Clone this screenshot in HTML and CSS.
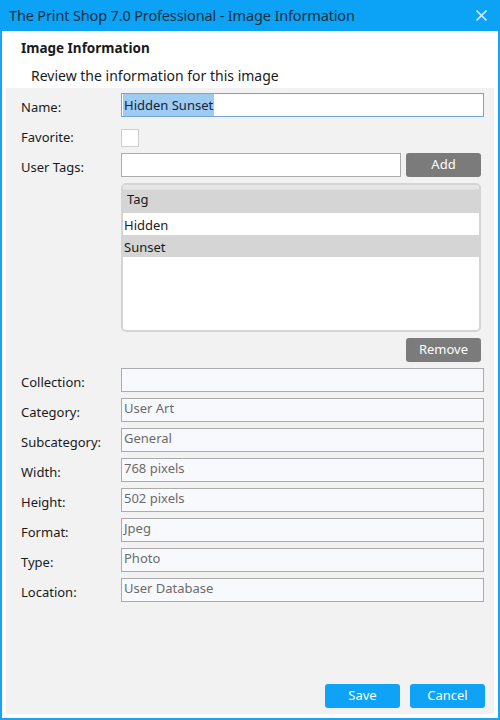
FILE: index.html
```html
<!DOCTYPE html>
<html>
<head>
<meta charset="utf-8">
<link rel="stylesheet" href="styles.css">
</head>
<body>
<div class="window">
  <div class="titlebar">
    <span class="title">The Print Shop 7.0 Professional - Image Information</span>
    <svg class="close" width="11" height="11" viewBox="0 0 11 11"><path d="M0.5 0.5 L10.5 10.5 M10.5 0.5 L0.5 10.5" stroke="#cfeafc" stroke-width="1.6" fill="none"/></svg>
  </div>
  <div class="header">
    <div class="h-title">Image Information</div>
    <div class="h-sub">Review the information for this image</div>
  </div>
  <div class="content">
    <div class="form">
      <div class="lbl">Name:</div>
      <div class="input focus"><span class="sel">Hidden Sunset</span></div>

      <div class="lbl">Favorite:</div>
      <div class="cbrow"><div class="checkbox"></div></div>

      <div class="lbl">User Tags:</div>
      <div class="tagrow">
        <div class="input tagin"></div>
        <div class="btn gray">Add</div>
      </div>

      <div></div>
      <div class="taglist">
        <div class="tl-head">Tag</div>
        <div class="tl-row">Hidden</div>
        <div class="tl-row alt">Sunset</div>
      </div>

      <div></div>
      <div class="remrow"><div class="btn gray">Remove</div></div>

      <div class="lbl">Collection:</div>
      <div class="field"></div>
      <div class="lbl">Category:</div>
      <div class="field">User Art</div>
      <div class="lbl">Subcategory:</div>
      <div class="field">General</div>
      <div class="lbl">Width:</div>
      <div class="field">768 pixels</div>
      <div class="lbl">Height:</div>
      <div class="field">502 pixels</div>
      <div class="lbl">Format:</div>
      <div class="field">Jpeg</div>
      <div class="lbl">Type:</div>
      <div class="field">Photo</div>
      <div class="lbl">Location:</div>
      <div class="field">User Database</div>
    </div>
    <div class="footer">
      <div class="btn blue">Save</div>
      <div class="btn blue">Cancel</div>
    </div>
  </div>
</div>
</body>
</html>
```

FILE: styles.css
```css
* { box-sizing: border-box; }
html, body { margin: 0; padding: 0; }
body {
  width: 500px;
  height: 720px;
  font-family: "Noto Sans", "Open Sans", sans-serif;
  font-size: 13px;
  color: #1a1a1a;
  background: #ffffff;
}
.window {
  width: 500px;
  height: 720px;
  border: 2px solid #1aa3ee;
  border-top: none;
  display: flex;
  flex-direction: column;
  background: #ffffff;
}
.titlebar {
  height: 31px;
  margin: 0 -2px;
  background: #0ca2f6;
  display: flex;
  align-items: center;
  justify-content: space-between;
  padding: 0 13px 1px 9px;
}
.title {
  font-size: 14.5px;
  color: #14303f;
  letter-spacing: -0.15px;
}
.close { display: block; }
.header {
  height: 57px;
  padding: 7px 0 0 19px;
}
.h-title {
  font-weight: bold;
  font-size: 13.5px;
  line-height: 20px;
}
.h-sub {
  font-size: 14px;
  line-height: 20px;
  margin-top: 8px;
  padding-left: 10px;
}
.content {
  flex: 1;
  margin: 0 4px 4px 4px;
  background: #f2f2f2;
  display: flex;
  flex-direction: column;
}
.form {
  display: grid;
  grid-template-columns: 100px 1fr;
  row-gap: 6px;
  padding: 5px 10px 0 15px;
  grid-auto-rows: auto;
}
.lbl {
  margin-top: 6px;
  line-height: 17px;
  white-space: nowrap;
}
.input {
  height: 24px;
  border: 1px solid #ababab;
  background: #ffffff;
  padding: 0 1px;
  line-height: 17px;
  display: flex;
}
.input.focus {
  border-color: #6fa6dd;
}
.sel {
  background: #9ecbf0;
  color: #14233a;
  height: 22px;
  padding: 3px 1px 0 1px;
  line-height: 17px;
}
.cbrow { height: 24px; }
.checkbox {
  width: 18px;
  height: 18px;
  margin-top: 6px;
  background: #ffffff;
  border: 1px solid #cfcfcf;
}
.tagrow {
  display: flex;
  gap: 5px;
  padding-right: 3px;
}
.tagin { flex: 1; }
.btn {
  width: 75px;
  height: 24px;
  border-radius: 3px;
  color: #ffffff;
  display: flex;
  align-items: center;
  justify-content: center;
  line-height: 17px;
  padding-bottom: 1px;
}
.btn.gray { background: #7b7b7b; }
.btn.blue { background: #0ea3f6; }
.taglist {
  height: 149px;
  margin-right: 3px;
  border: 2px solid #d4d4d4;
  border-radius: 5px;
  background: #ffffff;
  overflow: hidden;
}
.tl-head {
  height: 28px;
  background: linear-gradient(#e6e6e6 0, #e6e6e6 4px, #d5d5d5 5px, #d5d5d5 100%);
  padding: 6px 0 0 4px;
  line-height: 17px;
}
.tl-row {
  height: 22px;
  padding: 4px 0 0 1px;
  line-height: 17px;
  background: #ffffff;
}
.tl-row.alt { background: #d5d5d5; }
.remrow {
  display: flex;
  justify-content: flex-end;
  padding-right: 3px;
}
.field {
  height: 24px;
  border: 1px solid #ababab;
  background: #f8f9fd;
  color: #6b6b6b;
  padding: 1px 2px 0 2px;
  line-height: 17px;
}
.footer {
  margin-top: auto;
  display: flex;
  justify-content: flex-end;
  gap: 10px;
  padding: 0 9px 6px 0;
}
```
